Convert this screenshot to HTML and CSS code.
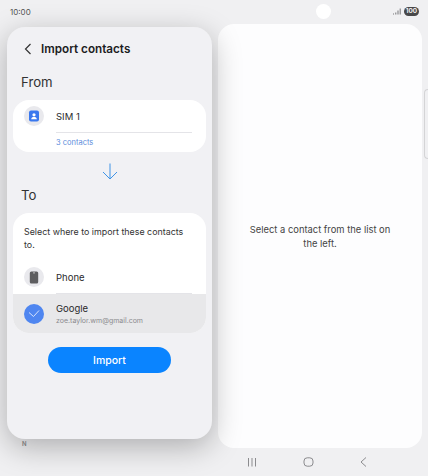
FILE: index.html
```html
<!DOCTYPE html>
<html lang="en">
<head>
    <meta charset="UTF-8">
    <meta name="viewport" content="width=device-width, initial-scale=1.0">
    <title>Import contacts</title>
    <link rel="stylesheet" href="styles.css">
</head>
<body>
    <div class="status-bar">
        <span class="time">10:00</span>
        <div class="status-icons">
            <svg class="signal" width="8" height="7" viewBox="0 0 8 7">
                <path d="M.5 6.5v-1M2.8 6.5V4.5M5 6.5V2.5M7.2 6.5V.5" stroke="#77777a" stroke-width="1" fill="none"/>
            </svg>
            <span class="battery">100</span>
        </div>
    </div>
    <div class="camera"></div>
    <div class="side-handle"></div>

    <div class="panels">
        <div class="left-col">
            <main class="left-panel">
                <header class="title-row">
                    <svg width="8" height="12" viewBox="0 0 8 12">
                        <path d="M6.5 1L1.5 6l5 5" stroke="#333" stroke-width="1.2" fill="none"/>
                    </svg>
                    <h1>Import contacts</h1>
                </header>

                <h2>From</h2>
                <section class="card from-card">
                    <div class="row">
                        <div class="icon-circle">
                            <svg width="12" height="12" viewBox="0 0 12 12">
                                <rect x="1" y="0.5" width="10" height="11" rx="2" fill="#3a78ee"/>
                                <circle cx="6" cy="4.8" r="1.6" fill="#fff"/>
                                <path d="M3.2 9.2c0-1.5 1.3-2.1 2.8-2.1s2.8.6 2.8 2.1z" fill="#fff"/>
                            </svg>
                        </div>
                        <span class="row-name">SIM 1</span>
                    </div>
                    <div class="count"><span>3 contacts</span></div>
                </section>

                <div class="arrow">
                    <svg width="16" height="17" viewBox="0 0 16 17">
                        <path d="M8 .5v15.5M1 9l7 7 7-7" stroke="#3f93e6" stroke-width="1" fill="none"/>
                    </svg>
                </div>

                <h2>To</h2>
                <section class="card to-card">
                    <p class="prompt">Select where to import these contacts to.</p>
                    <div class="row phone-row">
                        <div class="icon-circle">
                            <svg width="10" height="13" viewBox="0 0 10 13">
                                <rect x="0.8" y="0.5" width="8.4" height="12" rx="1.5" fill="#5e5e60"/>
                                <rect x="4.2" y="1.4" width="1.6" height="1" fill="#ddd"/>
                            </svg>
                        </div>
                        <span class="row-name">Phone</span>
                    </div>
                    <div class="row google-row">
                        <div class="icon-circle checked">
                            <svg width="12" height="9" viewBox="0 0 12 9">
                                <path d="M1 3.5L5.5 7.5 11 1.5" stroke="#d5e2fb" stroke-width="1" fill="none"/>
                            </svg>
                        </div>
                        <div>
                            <div class="row-name">Google</div>
                            <div class="email">zoe.taylor.wm@gmail.com</div>
                        </div>
                    </div>
                </section>

                <button class="import-btn">Import</button>
            </main>
            <span class="letter">N</span>
        </div>

        <div class="right-col">
            <aside class="right-panel">
                <p>Select a contact from the list on the left.</p>
            </aside>
            <nav class="nav-bar">
                <svg width="10" height="10" viewBox="0 0 10 10">
                    <path d="M1.5 1v8.5M5 1v8.5M8.5 1v8.5" stroke="#8b8b8e" stroke-width="1" fill="none"/>
                </svg>
                <svg width="11" height="10" viewBox="0 0 11 10">
                    <rect x="1" y="0.8" width="9" height="8.4" rx="3.2" stroke="#8b8b8e" stroke-width="1" fill="none"/>
                </svg>
                <svg width="7" height="10" viewBox="0 0 7 10">
                    <path d="M6 .5L1 5l5 4.5" stroke="#8b8b8e" stroke-width="1" fill="none"/>
                </svg>
            </nav>
        </div>
    </div>
</body>
</html>
```

FILE: styles.css
```css
* {
    box-sizing: border-box;
}

html, body {
    height: 100%;
}

body {
    margin: 0;
    background-color: #f0f0f2;
    font-family: Inter, "Noto Sans", sans-serif;
    color: #2a2a2c;
    overflow: hidden;
}

.status-bar {
    height: 24px;
    padding: 0 9px 1px 10px;
    display: flex;
    align-items: center;
    justify-content: space-between;
}

.time {
    font-size: 8px;
    color: #555;
}

.status-icons {
    display: flex;
    align-items: center;
    gap: 3px;
}

.battery {
    width: 15px;
    height: 9px;
    border-radius: 5px;
    background-color: #48484a;
    color: #fff;
    font-size: 6.5px;
    font-weight: 600;
    line-height: 9px;
    text-align: center;
}

.camera {
    position: absolute;
    left: 316px;
    top: 4px;
    width: 15px;
    height: 15px;
    border-radius: 50%;
    background-color: #fff;
}

.side-handle {
    position: absolute;
    right: 0;
    top: 89px;
    width: 4px;
    height: 70px;
    border: 1px solid #d4d4d6;
    border-right: none;
    border-radius: 4px 0 0 4px;
}

.panels {
    display: flex;
}

.left-col {
    width: 211px;
    margin-left: 7px;
    padding: 3px 6px 0 0;
    position: relative;
    z-index: 1;
}

.left-panel {
    height: 412px;
    padding: 0 6px;
    background-color: #f1f1f4;
    border-radius: 18px;
    box-shadow: 0 8px 30px rgba(0, 0, 0, 0.28);
    display: flex;
    flex-direction: column;
}

.letter {
    display: block;
    margin: 1px 0 0 15px;
    font-size: 6px;
    font-weight: 600;
    color: #777;
}

.title-row {
    height: 44px;
    padding-left: 11px;
    display: flex;
    align-items: center;
    gap: 9px;
}

h1 {
    margin: 0;
    font-size: 11.7px;
    font-weight: 600;
    color: #1c1c1e;
}

h2 {
    margin: 2px 0 0;
    padding-left: 8px;
    font-size: 13.2px;
    font-weight: 400;
    line-height: 18px;
    color: #333;
}

.from-card {
    height: 52px;
    margin-top: 9px;
}

.to-card {
    height: 120px;
    margin-top: 9px;
}

.card {
    background-color: #fff;
    border-radius: 16px;
    overflow: hidden;
}

.row {
    display: flex;
    align-items: center;
    gap: 12px;
    padding-left: 11px;
}

.from-card .row {
    height: 32px;
}

.icon-circle {
    width: 20px;
    height: 20px;
    border-radius: 50%;
    background-color: #e9e9ed;
    display: flex;
    align-items: center;
    justify-content: center;
    flex-shrink: 0;
}

.icon-circle.checked {
    background-color: #4f86f0;
}

.row-name {
    font-size: 9.5px;
    color: #2a2a2c;
}

.count {
    margin: 0 14px 0 43px;
    height: 20px;
    border-top: 1px solid #e4e4e8;
    font-size: 7.5px;
    line-height: 19px;
    color: #5b8ddc;
}

.arrow {
    height: 32px;
    padding-top: 11px;
    display: flex;
    justify-content: center;
}

.prompt {
    margin: 0;
    padding: 12px 11px 0;
    font-size: 8.9px;
    line-height: 13px;
    color: #333;
}

.phone-row {
    height: 41px;
    margin-top: 2px;
    padding-top: 7px;
    position: relative;
}

/* divider above the selected row, starts under the label */
.phone-row::after {
    content: "";
    position: absolute;
    left: 43px;
    right: 14px;
    bottom: 0;
    height: 1px;
    background-color: #e4e4e8;
}

.google-row {
    height: 39px;
    background-color: #e8e8ea;
}

.email {
    margin-top: 2px;
    font-size: 7px;
    color: #8b8b8e;
}

.import-btn {
    width: 123px;
    height: 26px;
    margin: 14px auto 0;
    border: none;
    border-radius: 13px;
    background-color: #0a84ff;
    color: #fff;
    font-family: inherit;
    font-size: 10.5px;
    font-weight: 500;
}

.right-col {
    width: 204px;
}

.right-panel {
    height: 424px;
    background-color: #fdfdfe;
    border-radius: 16px;
    display: flex;
    align-items: center;
    justify-content: center;
    padding: 1px 26px 0;
}

.right-panel p {
    margin: 0;
    font-size: 9.4px;
    line-height: 13.5px;
    text-align: center;
    color: #444;
}

.nav-bar {
    height: 28px;
    padding-left: 29px;
    display: flex;
    align-items: center;
    gap: 46px;
}
```
